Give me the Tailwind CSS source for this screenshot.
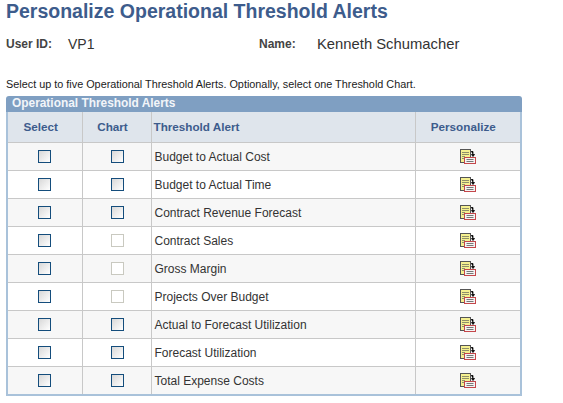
<!DOCTYPE html>
<html lang="en">
<head>
  <meta charset="UTF-8">
  <title>Personalize Operational Threshold Alerts</title>
  <script src="https://cdn.jsdelivr.net/npm/@tailwindcss/browser@4"></script>
</head>
<body class="bg-white font-['Liberation_Sans',Arial,sans-serif] overflow-hidden">
<div class="w-[563px] h-[403px] pl-[6px] overflow-hidden">
  <h1 class="h-[22px] text-[19.5px] leading-[22px] font-bold text-[#3d5c8c] whitespace-nowrap">Personalize Operational Threshold Alerts</h1>

  <!-- user row -->
  <div class="flex items-center h-[20px] mt-[12px] text-[#333]">
    <span class="w-[62px] text-[12px] font-bold text-[#444]">User ID:</span>
    <span class="w-[191px] text-[14px]">VP1</span>
    <span class="w-[58px] text-[12px] font-bold text-[#444]">Name:</span>
    <span class="text-[14.8px]">Kenneth Schumacher</span>
  </div>

  <p class="mt-[23px] h-[15px] text-[10.85px] leading-[15px] text-[#222] whitespace-nowrap">Select up to five Operational Threshold Alerts. Optionally, select one Threshold Chart.</p>

  <!-- grid -->
  <div class="mt-[4px] w-[516px]">
    <div class="h-[16px] bg-[#7f9fc2] rounded-t-[3px] pl-[6px] text-[11.9px] leading-[15px] font-bold text-[#f2f5f9]">Operational Threshold Alerts</div>
    <table class="w-[516px] table-fixed border-collapse border-l-2 border-r-2 border-b-2 border-[#a9c2da] text-[12px] text-[#333]">
      <colgroup>
        <col class="w-[75px]"><col class="w-[69px]"><col class="w-[264px]"><col>
      </colgroup>
      <thead>
        <tr class="h-[30px] bg-[#dfe5ec] text-[11.7px] font-bold text-[#3d5c8c]">
          <th class="border border-[#c8c8c8] border-l-0 border-t-0 font-bold pr-[8px]">Select</th>
          <th class="border border-[#c8c8c8] border-t-0 font-bold pr-[8px]">Chart</th>
          <th class="border border-[#c8c8c8] border-t-0 font-bold text-left pl-[2px]">Threshold Alert</th>
          <th class="border border-[#c8c8c8] border-r-0 border-t-0 font-bold pr-[9px]">Personalize</th>
        </tr>
      </thead>
      <tbody>
        <tr class="h-[28px] bg-[#f7f7f7]">
          <td class="border border-[#c8c8c8] border-l-0"><div class="mx-auto size-[13px] border border-[#144d7c] bg-gradient-to-br from-[#d8d8d8] to-white"></div></td>
          <td class="border border-[#c8c8c8] pl-[2px]"><div class="mx-auto size-[13px] border border-[#144d7c] bg-gradient-to-br from-[#d8d8d8] to-white"></div></td>
          <td class="border border-[#c8c8c8] pl-[3px] pt-[2px]">Budget to Actual Cost</td>
          <td class="border border-[#c8c8c8] border-r-0"><svg class="mx-auto" width="16" height="15" viewBox="0 0 16 15"><rect x="0.5" y="0.5" width="10" height="13" fill="#f5f090" stroke="#555"/><path d="M2 3.500h7M2 5.500h7M2 7.500h3M2 9.500h2" stroke="#8f8f6a"/><path d="M11 2.500h2v3M11.500 5.500h3L13 7.500z" stroke="#000" fill="#000" stroke-width="0.8"/><rect x="4.500" y="8.500" width="11" height="6" fill="#f4f4f4" stroke="#c4474b"/><path d="M6.500 10.500h7M6.500 12.500h7" stroke="#777"/></svg></td>
        </tr>
        <tr class="h-[28px] bg-white">
          <td class="border border-[#c8c8c8] border-l-0"><div class="mx-auto size-[13px] border border-[#144d7c] bg-gradient-to-br from-[#d8d8d8] to-white"></div></td>
          <td class="border border-[#c8c8c8] pl-[2px]"><div class="mx-auto size-[13px] border border-[#144d7c] bg-gradient-to-br from-[#d8d8d8] to-white"></div></td>
          <td class="border border-[#c8c8c8] pl-[3px] pt-[2px]">Budget to Actual Time</td>
          <td class="border border-[#c8c8c8] border-r-0"><svg class="mx-auto" width="16" height="15" viewBox="0 0 16 15"><rect x="0.5" y="0.5" width="10" height="13" fill="#f5f090" stroke="#555"/><path d="M2 3.500h7M2 5.500h7M2 7.500h3M2 9.500h2" stroke="#8f8f6a"/><path d="M11 2.500h2v3M11.500 5.500h3L13 7.500z" stroke="#000" fill="#000" stroke-width="0.8"/><rect x="4.500" y="8.500" width="11" height="6" fill="#f4f4f4" stroke="#c4474b"/><path d="M6.500 10.500h7M6.500 12.500h7" stroke="#777"/></svg></td>
        </tr>
        <tr class="h-[28px] bg-[#f7f7f7]">
          <td class="border border-[#c8c8c8] border-l-0"><div class="mx-auto size-[13px] border border-[#144d7c] bg-gradient-to-br from-[#d8d8d8] to-white"></div></td>
          <td class="border border-[#c8c8c8] pl-[2px]"><div class="mx-auto size-[13px] border border-[#144d7c] bg-gradient-to-br from-[#d8d8d8] to-white"></div></td>
          <td class="border border-[#c8c8c8] pl-[3px] pt-[2px]">Contract Revenue Forecast</td>
          <td class="border border-[#c8c8c8] border-r-0"><svg class="mx-auto" width="16" height="15" viewBox="0 0 16 15"><rect x="0.5" y="0.5" width="10" height="13" fill="#f5f090" stroke="#555"/><path d="M2 3.500h7M2 5.500h7M2 7.500h3M2 9.500h2" stroke="#8f8f6a"/><path d="M11 2.500h2v3M11.500 5.500h3L13 7.500z" stroke="#000" fill="#000" stroke-width="0.8"/><rect x="4.500" y="8.500" width="11" height="6" fill="#f4f4f4" stroke="#c4474b"/><path d="M6.500 10.500h7M6.500 12.500h7" stroke="#777"/></svg></td>
        </tr>
        <tr class="h-[28px] bg-white">
          <td class="border border-[#c8c8c8] border-l-0"><div class="mx-auto size-[13px] border border-[#144d7c] bg-gradient-to-br from-[#d8d8d8] to-white"></div></td>
          <td class="border border-[#c8c8c8] pl-[2px]"><div class="mx-auto size-[13px] border border-[#c9c9c0] bg-white"></div></td>
          <td class="border border-[#c8c8c8] pl-[3px] pt-[2px]">Contract Sales</td>
          <td class="border border-[#c8c8c8] border-r-0"><svg class="mx-auto" width="16" height="15" viewBox="0 0 16 15"><rect x="0.5" y="0.5" width="10" height="13" fill="#f5f090" stroke="#555"/><path d="M2 3.500h7M2 5.500h7M2 7.500h3M2 9.500h2" stroke="#8f8f6a"/><path d="M11 2.500h2v3M11.500 5.500h3L13 7.500z" stroke="#000" fill="#000" stroke-width="0.8"/><rect x="4.500" y="8.500" width="11" height="6" fill="#f4f4f4" stroke="#c4474b"/><path d="M6.500 10.500h7M6.500 12.500h7" stroke="#777"/></svg></td>
        </tr>
        <tr class="h-[28px] bg-[#f7f7f7]">
          <td class="border border-[#c8c8c8] border-l-0"><div class="mx-auto size-[13px] border border-[#144d7c] bg-gradient-to-br from-[#d8d8d8] to-white"></div></td>
          <td class="border border-[#c8c8c8] pl-[2px]"><div class="mx-auto size-[13px] border border-[#c9c9c0] bg-white"></div></td>
          <td class="border border-[#c8c8c8] pl-[3px] pt-[2px]">Gross Margin</td>
          <td class="border border-[#c8c8c8] border-r-0"><svg class="mx-auto" width="16" height="15" viewBox="0 0 16 15"><rect x="0.5" y="0.5" width="10" height="13" fill="#f5f090" stroke="#555"/><path d="M2 3.500h7M2 5.500h7M2 7.500h3M2 9.500h2" stroke="#8f8f6a"/><path d="M11 2.500h2v3M11.500 5.500h3L13 7.500z" stroke="#000" fill="#000" stroke-width="0.8"/><rect x="4.500" y="8.500" width="11" height="6" fill="#f4f4f4" stroke="#c4474b"/><path d="M6.500 10.500h7M6.500 12.500h7" stroke="#777"/></svg></td>
        </tr>
        <tr class="h-[28px] bg-white">
          <td class="border border-[#c8c8c8] border-l-0"><div class="mx-auto size-[13px] border border-[#144d7c] bg-gradient-to-br from-[#d8d8d8] to-white"></div></td>
          <td class="border border-[#c8c8c8] pl-[2px]"><div class="mx-auto size-[13px] border border-[#c9c9c0] bg-white"></div></td>
          <td class="border border-[#c8c8c8] pl-[3px] pt-[2px]">Projects Over Budget</td>
          <td class="border border-[#c8c8c8] border-r-0"><svg class="mx-auto" width="16" height="15" viewBox="0 0 16 15"><rect x="0.5" y="0.5" width="10" height="13" fill="#f5f090" stroke="#555"/><path d="M2 3.500h7M2 5.500h7M2 7.500h3M2 9.500h2" stroke="#8f8f6a"/><path d="M11 2.500h2v3M11.500 5.500h3L13 7.500z" stroke="#000" fill="#000" stroke-width="0.8"/><rect x="4.500" y="8.500" width="11" height="6" fill="#f4f4f4" stroke="#c4474b"/><path d="M6.500 10.500h7M6.500 12.500h7" stroke="#777"/></svg></td>
        </tr>
        <tr class="h-[28px] bg-[#f7f7f7]">
          <td class="border border-[#c8c8c8] border-l-0"><div class="mx-auto size-[13px] border border-[#144d7c] bg-gradient-to-br from-[#d8d8d8] to-white"></div></td>
          <td class="border border-[#c8c8c8] pl-[2px]"><div class="mx-auto size-[13px] border border-[#144d7c] bg-gradient-to-br from-[#d8d8d8] to-white"></div></td>
          <td class="border border-[#c8c8c8] pl-[3px] pt-[2px]">Actual to Forecast Utilization</td>
          <td class="border border-[#c8c8c8] border-r-0"><svg class="mx-auto" width="16" height="15" viewBox="0 0 16 15"><rect x="0.5" y="0.5" width="10" height="13" fill="#f5f090" stroke="#555"/><path d="M2 3.500h7M2 5.500h7M2 7.500h3M2 9.500h2" stroke="#8f8f6a"/><path d="M11 2.500h2v3M11.500 5.500h3L13 7.500z" stroke="#000" fill="#000" stroke-width="0.8"/><rect x="4.500" y="8.500" width="11" height="6" fill="#f4f4f4" stroke="#c4474b"/><path d="M6.500 10.500h7M6.500 12.500h7" stroke="#777"/></svg></td>
        </tr>
        <tr class="h-[28px] bg-white">
          <td class="border border-[#c8c8c8] border-l-0"><div class="mx-auto size-[13px] border border-[#144d7c] bg-gradient-to-br from-[#d8d8d8] to-white"></div></td>
          <td class="border border-[#c8c8c8] pl-[2px]"><div class="mx-auto size-[13px] border border-[#144d7c] bg-gradient-to-br from-[#d8d8d8] to-white"></div></td>
          <td class="border border-[#c8c8c8] pl-[3px] pt-[2px]">Forecast Utilization</td>
          <td class="border border-[#c8c8c8] border-r-0"><svg class="mx-auto" width="16" height="15" viewBox="0 0 16 15"><rect x="0.5" y="0.5" width="10" height="13" fill="#f5f090" stroke="#555"/><path d="M2 3.500h7M2 5.500h7M2 7.500h3M2 9.500h2" stroke="#8f8f6a"/><path d="M11 2.500h2v3M11.500 5.500h3L13 7.500z" stroke="#000" fill="#000" stroke-width="0.8"/><rect x="4.500" y="8.500" width="11" height="6" fill="#f4f4f4" stroke="#c4474b"/><path d="M6.500 10.500h7M6.500 12.500h7" stroke="#777"/></svg></td>
        </tr>
        <tr class="h-[29px] bg-[#f7f7f7]">
          <td class="border border-[#c8c8c8] border-l-0 border-b-0"><div class="mx-auto size-[13px] border border-[#144d7c] bg-gradient-to-br from-[#d8d8d8] to-white"></div></td>
          <td class="border border-[#c8c8c8] border-b-0 pl-[2px]"><div class="mx-auto size-[13px] border border-[#144d7c] bg-gradient-to-br from-[#d8d8d8] to-white"></div></td>
          <td class="border border-[#c8c8c8] border-b-0 pl-[3px] pt-[2px]">Total Expense Costs</td>
          <td class="border border-[#c8c8c8] border-r-0 border-b-0"><svg class="mx-auto" width="16" height="15" viewBox="0 0 16 15"><rect x="0.5" y="0.5" width="10" height="13" fill="#f5f090" stroke="#555"/><path d="M2 3.500h7M2 5.500h7M2 7.500h3M2 9.500h2" stroke="#8f8f6a"/><path d="M11 2.500h2v3M11.500 5.500h3L13 7.500z" stroke="#000" fill="#000" stroke-width="0.8"/><rect x="4.500" y="8.500" width="11" height="6" fill="#f4f4f4" stroke="#c4474b"/><path d="M6.500 10.500h7M6.500 12.500h7" stroke="#777"/></svg></td>
        </tr>
      </tbody>
    </table>
  </div>
</div>
</body>
</html>
